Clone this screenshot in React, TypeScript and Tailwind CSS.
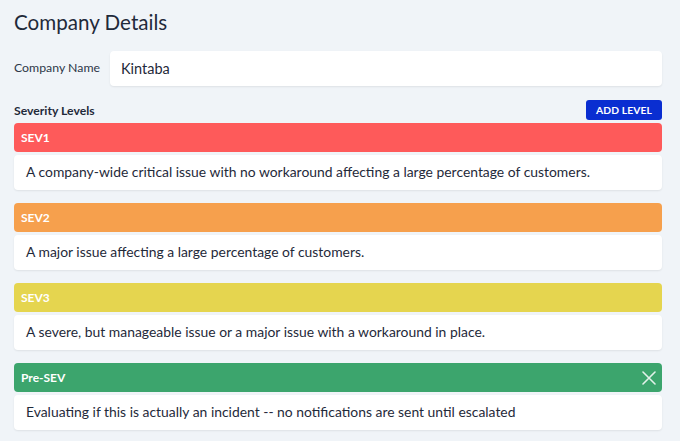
import React from "react";

const levels = [
  { name: "SEV1", color: "bg-[#fe5a5a]", desc: "A company-wide critical issue with no workaround affecting a large percentage of customers." },
  { name: "SEV2", color: "bg-[#f6a04d]", desc: "A major issue affecting a large percentage of customers." },
  { name: "SEV3", color: "bg-[#e5d54f]", desc: "A severe, but manageable issue or a major issue with a workaround in place." },
  { name: "Pre-SEV", color: "bg-[#3ca56d]", desc: "Evaluating if this is actually an incident -- no notifications are sent until escalated", close: true },
];

export default function App() {
  return (
    <div className="w-[680px] h-[441px] bg-[#f0f4f8] text-[#1f2a3a] px-[14px] pt-[8px] overflow-hidden" style={{ fontFamily: 'Lato, "Noto Sans", sans-serif' }}>
      <h1 className="text-[20.6px] leading-[28px] text-[#1f2a3a]">Company Details</h1>
      <div className="flex items-center mt-[15px] w-[648px]">
        <div className="w-[96px] text-[12.3px] text-[#2d3748]">Company Name</div>
        <div className="flex-1 h-[35px] bg-white rounded-[4px] shadow-[0_1px_2px_rgba(0,0,0,0.08)] flex items-center px-[11px] text-[14.5px]">Kintaba</div>
      </div>
      <div className="flex items-end justify-between w-[648px] mt-[14px]">
        <div className="text-[12.2px] font-bold leading-[16px] mb-[1px]">Severity Levels</div>
        <button className="h-[20px] px-[10px] rounded-[3px] bg-[#0a2ed1] text-white text-[10.3px] font-bold leading-none tracking-[0.1px]">ADD LEVEL</button>
      </div>
      <div className="flex flex-col w-[648px] mt-[3px] gap-[13px]">
        {levels.map((l) => (
          <div key={l.name} className="flex flex-col gap-[3px]">
            <div className={`${l.color} h-[29px] rounded-[4px] flex items-center justify-between px-[7px] text-white text-[12px] font-bold`}>
              <span>{l.name}</span>
              {l.close && (
                <svg width="14" height="14" viewBox="0 0 14 14" className="mr-[-1px]">
                  <path d="M1 1 L13 13 M13 1 L1 13" stroke="rgba(255,255,255,0.85)" strokeWidth="1.6" strokeLinecap="round" />
                </svg>
              )}
            </div>
            <div className="bg-white h-[35px] rounded-[4px] shadow-[0_1px_2px_rgba(0,0,0,0.08)] flex items-center px-[12px] text-[13.9px] text-[#1f2a3a]">
              {l.desc}
            </div>
          </div>
        ))}
      </div>
    </div>
  );
}
